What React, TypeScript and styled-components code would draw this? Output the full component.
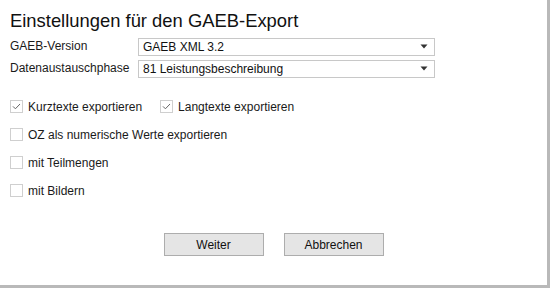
import React, { useState } from 'react'
import styled, { createGlobalStyle } from 'styled-components';

const GlobalStyle = createGlobalStyle`
body {
    margin: 0;
    background: #ffffff;
    font-family: "Liberation Sans", Arial, sans-serif;
    color: #1a1a1a;
}
`

const versions = ['GAEB XML 3.2', 'GAEB XML 3.1', 'GAEB 90', 'GAEB 2000'];
const phases = ['81 Leistungsbeschreibung', '83 Angebotsaufforderung', '84 Angebotsabgabe', '86 Auftragserteilung'];

function Arrow() {
    return (
        <svg width='8' height='5' viewBox='0 0 8 5'>
            <path d='M0.5 0.5 H7.5 L4 4.5 Z' fill='#333' />
        </svg>
    )
}

function Check() {
    return (
        <svg width='9' height='7' viewBox='0 0 9 7'>
            <path d='M1 3.4 L3.4 5.8 L8 1' fill='none' stroke='#666' strokeWidth='1' />
        </svg>
    )
}

function CheckItem({ label, checked, onToggle }: { label: string, checked: boolean, onToggle: () => void }) {
    return (
        <CheckLabel onClick={onToggle}>
            <Box>{checked && <Check />}</Box>
            <span>{label}</span>
        </CheckLabel>
    )
}

function App() {

    const [version, setVersion] = useState(versions[0]);
    const [phase, setPhase] = useState(phases[0]);
    const [kurz, setKurz] = useState(true);
    const [lang, setLang] = useState(true);
    const [oz, setOz] = useState(false);
    const [teil, setTeil] = useState(false);
    const [bilder, setBilder] = useState(false);

    return (
        <>
        <GlobalStyle />
        <Window>
            <Title>Einstellungen für den GAEB-Export</Title>
            <FieldGrid>
                <Label>GAEB-Version</Label>
                <SelectWrap>
                    <Select value={version} onChange={(e) => { setVersion(e.currentTarget.value) }}>
                        {versions.map((v) => <option key={v}>{v}</option>)}
                    </Select>
                    <ArrowSlot><Arrow /></ArrowSlot>
                </SelectWrap>
                <Label>Datenaustauschphase</Label>
                <SelectWrap>
                    <Select value={phase} onChange={(e) => { setPhase(e.currentTarget.value) }}>
                        {phases.map((p) => <option key={p}>{p}</option>)}
                    </Select>
                    <ArrowSlot><Arrow /></ArrowSlot>
                </SelectWrap>
            </FieldGrid>
            <Options>
                <Row>
                    <CheckItem label='Kurztexte exportieren' checked={kurz} onToggle={() => setKurz(!kurz)} />
                    <CheckItem label='Langtexte exportieren' checked={lang} onToggle={() => setLang(!lang)} />
                </Row>
                <Row>
                    <CheckItem label='OZ als numerische Werte exportieren' checked={oz} onToggle={() => setOz(!oz)} />
                </Row>
                <Row>
                    <CheckItem label='mit Teilmengen' checked={teil} onToggle={() => setTeil(!teil)} />
                </Row>
                <Row>
                    <CheckItem label='mit Bildern' checked={bilder} onToggle={() => setBilder(!bilder)} />
                </Row>
            </Options>
            <ButtonBar>
                <Button type='button'>Weiter</Button>
                <Button type='button'>Abbrechen</Button>
            </ButtonBar>
        </Window>
        </>
    )
}

export default App;

const Window = styled.div`
box-sizing: border-box;
width: 550px;
height: 288px;
background: #ffffff;
border-right: 3px solid #b9b9b9;
border-bottom: 3px solid #b9b9b9;
padding: 11px 0 0 10px;
display: flex;
flex-direction: column;
`

const Title = styled.h1`
margin: 0;
font-size: 18.4px;
font-weight: normal;
line-height: 20px;
color: #111;
`

const FieldGrid = styled.div`
display: grid;
grid-template-columns: 128px 297px;
row-gap: 4px;
margin-top: 6px;
align-items: center;
`

const Label = styled.div`
font-size: 12px;
color: #1a1a1a;
`

const SelectWrap = styled.div`
position: relative;
height: 18px;
`

const Select = styled.select`
appearance: none;
box-sizing: border-box;
width: 100%;
height: 18px;
margin: 0;
padding: 0 20px 0 4px;
border: 1px solid #c8c8c8;
border-radius: 0;
background: #ffffff;
font-family: "Liberation Sans", Arial, sans-serif;
font-size: 12px;
color: #111;
outline: none;
`

const ArrowSlot = styled.span`
position: absolute;
right: 7px;
top: 7px;
display: flex;
pointer-events: none;
`

const Options = styled.div`
display: flex;
flex-direction: column;
gap: 15px;
margin-top: 23px;
`

const Row = styled.div`
display: flex;
gap: 18px;
height: 13px;
align-items: center;
`

const CheckLabel = styled.label`
display: flex;
align-items: center;
gap: 5px;
font-size: 12px;
color: #1a1a1a;
cursor: default;
`

const Box = styled.span`
box-sizing: border-box;
width: 13px;
height: 13px;
border: 1px solid #cfcfcf;
background: #ffffff;
display: flex;
align-items: center;
justify-content: center;
`

const ButtonBar = styled.div`
display: flex;
justify-content: center;
gap: 20px;
margin-top: 36px;
margin-left: -10px;
`

const Button = styled.button`
box-sizing: border-box;
width: 100px;
height: 23px;
border: 1px solid #adadad;
border-radius: 0;
background: #e5e5e5;
font-family: "Liberation Sans", Arial, sans-serif;
font-size: 12px;
color: #111;
padding: 0;
`
